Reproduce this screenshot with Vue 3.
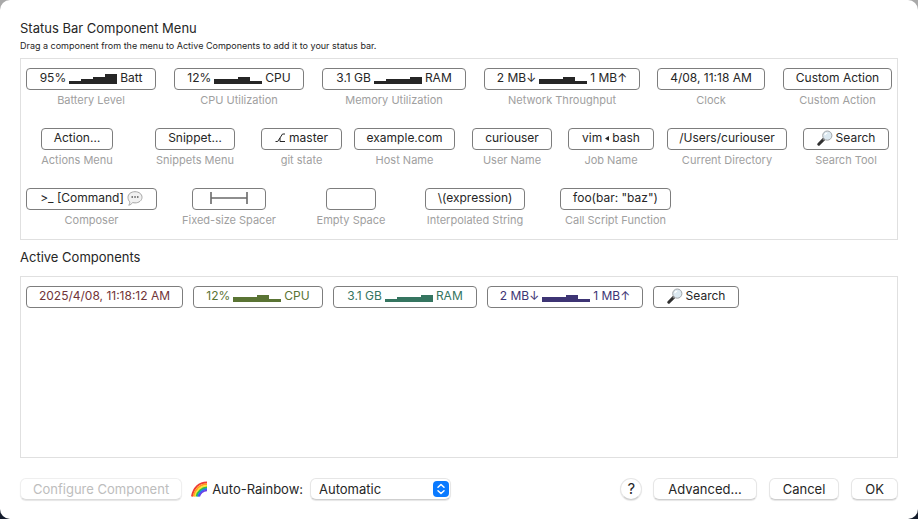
<script setup>
import { ref } from 'vue'

const rows = [
  [
    { label: 'Battery Level', before: '95%', bars: [3, 5, 7, 10], after: 'Batt', width: 130, gap: 0 },
    { label: 'CPU Utilization', before: '12%', bars: [5, 5, 7, 3], after: 'CPU', width: 130, gap: 18 },
    { label: 'Memory Utilization', before: '3.1 GB', bars: [3, 5, 5, 7], after: 'RAM', width: 144, gap: 18 },
    { label: 'Network Throughput', before: '2 MB↓', bars: [5, 5, 7, 3], after: '1 MB↑', width: 156, gap: 18 },
    { label: 'Clock', before: '4/08, 11:18 AM', width: 108, gap: 17 },
    { label: 'Custom Action', before: 'Custom Action', width: 109, gap: 18 },
  ],
  [
    { label: 'Actions Menu', before: 'Action…', width: 72, gap: 15 },
    { label: 'Snippets Menu', before: 'Snippet…', width: 80, gap: 42 },
    { label: 'git state', icon: 'branch', before: 'master', width: 81, gap: 26 },
    { label: 'Host Name', before: 'example.com', width: 101, gap: 12 },
    { label: 'User Name', before: 'curiouser', width: 80, gap: 17 },
    { label: 'Job Name', before: 'vim', icon2: 'triangle', after: 'bash', width: 86, gap: 16 },
    { label: 'Current Directory', before: '/Users/curiouser', width: 120, gap: 13 },
    { label: 'Search Tool', icon: 'search', before: 'Search', width: 86, gap: 16 },
  ],
  [
    { label: 'Composer', before: '>_ [Command]', icon2: 'bubble', width: 131, gap: 0 },
    { label: 'Fixed-size Spacer', icon: 'spacer', width: 74, gap: 35 },
    { label: 'Empty Space', width: 50, gap: 60 },
    { label: 'Interpolated String', before: '\\(expression)', width: 100, gap: 49 },
    { label: 'Call Script Function', before: 'foo(bar: "baz")', width: 111, gap: 35 },
  ],
]

const active = [
  { before: '2025/4/08, 11:18:12 AM', tone: 'red', width: 157 },
  { before: '12%', bars: [5, 5, 7, 3], after: 'CPU', tone: 'olive', width: 130 },
  { before: '3.1 GB', bars: [3, 5, 5, 7], after: 'RAM', tone: 'green', width: 144 },
  { before: '2 MB↓', bars: [5, 5, 7, 3], after: '1 MB↑', tone: 'indigo', width: 156 },
  { icon: 'search', before: 'Search', width: 86 },
]

const rainbow = ref('Automatic')
</script>

<template>
  <div class="backdrop">
    <main class="dialog">
      <h1 class="heading">Status Bar Component Menu</h1>
      <p class="hint">Drag a component from the menu to Active Components to add it to your status bar.</p>

      <section class="panel menu">
        <div v-for="(row, r) in rows" :key="r" class="row">
          <div
            v-for="item in row"
            :key="item.label"
            class="cell"
            :style="{ width: item.width + 'px', marginLeft: item.gap + 'px' }"
          >
            <button type="button" class="chip" :aria-label="item.label">
              <svg v-if="item.icon === 'branch'" class="glyph" width="11" height="10" viewBox="0 0 11 10">
                <path d="M.5 8.5h2.200L7.500 1H10M5 5v3.500h5" fill="none" stroke="currentColor" />
              </svg>
              <svg v-if="item.icon === 'search'" class="glyph" width="16" height="16" viewBox="0 0 16 16">
                <path d="M1.8 14.2 6.6 9.4" stroke="#303030" stroke-width="3" stroke-linecap="round" />
                <path d="m6 10 2-2" stroke="#888" stroke-width="1.5" />
                <circle cx="10.3" cy="5.6" r="4.6" fill="#dce9f1" stroke="#a2a5a8" />
                <path d="M7.8 5.1a2.6 2.6 0 0 1 2.4-2" fill="none" stroke="#fff" stroke-width="1.3" />
              </svg>
              <svg v-if="item.icon === 'spacer'" class="glyph" width="38" height="12" viewBox="0 0 38 12">
                <path d="M1 0v12M37 0v12M1 6h36" fill="none" stroke="#6a6a6a" stroke-width="1.6" />
              </svg>
              <span v-if="item.before">{{ item.before }}</span>
              <svg v-if="item.bars" class="bars" width="48" height="10" viewBox="0 0 48 10">
                <rect v-for="(h, i) in item.bars" :key="i" :x="i * 12" :y="10 - h" width="12" :height="h" />
              </svg>
              <svg v-if="item.icon2 === 'triangle'" class="glyph" width="4" height="6" viewBox="0 0 4 6">
                <path d="M0 3.5 4 1v5z" fill="currentColor" />
              </svg>
              <svg v-if="item.icon2 === 'bubble'" class="glyph" width="16" height="15" viewBox="0 0 16 15">
                <path d="M8 .7c4 0 7 2.4 7 5.6s-3 5.6-7 5.6c-.9 0-1.7-.1-2.5-.3C4.6 13 3.300 14 1.700 14.200c.8-.9 1.200-2.200 1-3.400C1.500 9.700 1 8 1 6.300 1 3.100 4 .7 8 .7z" fill="#f1f1f1" stroke="#a6a6a6" />
                <path d="M4.5 6H6M7.300 6h1.500M10 6h1.500" stroke="#555" stroke-width="1.3" />
              </svg>
              <span v-if="item.after">{{ item.after }}</span>
            </button>
            <span class="label">{{ item.label }}</span>
          </div>
        </div>
      </section>

      <h2 class="heading second">Active Components</h2>
      <section class="panel active">
        <button
          v-for="item in active"
          :key="item.before"
          type="button"
          class="chip"
          :class="item.tone"
          :style="{ width: item.width + 'px' }"
        >
          <svg v-if="item.icon === 'search'" class="glyph" width="16" height="16" viewBox="0 0 16 16">
            <path d="M1.8 14.2 6.6 9.4" stroke="#303030" stroke-width="3" stroke-linecap="round" />
            <path d="m6 10 2-2" stroke="#888" stroke-width="1.5" />
            <circle cx="10.3" cy="5.6" r="4.6" fill="#dce9f1" stroke="#a2a5a8" />
            <path d="M7.8 5.1a2.6 2.6 0 0 1 2.4-2" fill="none" stroke="#fff" stroke-width="1.3" />
          </svg>
          <span>{{ item.before }}</span>
          <svg v-if="item.bars" class="bars" width="48" height="10" viewBox="0 0 48 10">
            <rect v-for="(h, i) in item.bars" :key="i" :x="i * 12" :y="10 - h" width="12" :height="h" />
          </svg>
          <span v-if="item.after">{{ item.after }}</span>
        </button>
      </section>

      <footer class="footer">
        <button type="button" class="push configure" disabled>Configure Component</button>
        <label class="rainbow" for="rainbow">
          <svg width="17" height="17" viewBox="0 0 17 17" fill="none" stroke-width="2">
            <path d="M1 15.500C2.500 7 8 1.500 16 1.500" stroke="#ee3b35" />
            <path d="M2.700 15.500C4 8.500 9 3.300 16 3.300" stroke="#ff9a1f" />
            <path d="M4.200 15.500C5.300 9.500 10 5 16 5" stroke="#ffe23a" />
            <path d="M5.600 15.500C6.500 11 11 6.600 16 6.600" stroke="#2fc146" />
            <path d="M7 15.500C8 12 11.500 8.100 16 8.100" stroke="#2878f0" />
            <path d="M8.300 15.500c.7-2.800 3.500-6 7.700-6" stroke="#6a3be6" stroke-width="1.5" />
          </svg>
          Auto-Rainbow:
        </label>
        <div class="popup">
          <select id="rainbow" v-model="rainbow">
            <option>Automatic</option>
          </select>
          <svg class="arrows" width="16" height="16" viewBox="0 0 16 16">
            <rect width="16" height="16" rx="4" fill="#0a7aff" />
            <path d="M5 6.300 8 3.500l3 2.800M5 9.700l3 2.800 3-2.800" fill="none" stroke="#fff" stroke-width="1.5" stroke-linecap="round" stroke-linejoin="round" />
          </svg>
        </div>
        <span class="grow"></span>
        <button type="button" class="push help" aria-label="Help">?</button>
        <button type="button" class="push advanced">Advanced…</button>
        <button type="button" class="push cancel">Cancel</button>
        <button type="button" class="push">OK</button>
      </footer>
    </main>
  </div>
</template>

<style>
body {
  margin: 0;
}
</style>

<style scoped>
* {
  box-sizing: border-box;
}
.backdrop {
  display: flex;
  min-height: 100vh;
  background: linear-gradient(#a9a9a9 50%, #141c2c 50%);
  font-family: Inter, "Liberation Sans", sans-serif;
  color: #262626;
}
.dialog {
  display: flex;
  flex: 1;
  flex-direction: column;
  min-width: 0;
  padding: 20px 20px 19px;
  border-radius: 10px;
  background: #fff;
}
button,
select {
  font-family: inherit;
  color: inherit;
}
.heading {
  margin: 0;
  font-size: 13px;
  font-weight: 400;
  line-height: 16px;
}
.hint {
  margin: 4px 0 6px;
  font-size: 9px;
  line-height: 12px;
}
.panel {
  border: 1px solid #e0e0e0;
}
.menu {
  display: flex;
  flex-direction: column;
  gap: 20px;
  padding: 9px 5px 11px;
}
.row {
  display: flex;
}
.cell {
  display: flex;
  flex: none;
  flex-direction: column;
  align-items: center;
  gap: 2px;
}
.cell .chip {
  width: 100%;
}
.chip {
  display: flex;
  flex: none;
  align-items: center;
  justify-content: center;
  gap: 3px;
  height: 22px;
  padding: 0 0 2px;
  border: 1px solid #7d7d7d;
  border-radius: 4px;
  background: #fff;
  font-size: 12px;
  line-height: 16px;
  white-space: nowrap;
}
.bars {
  margin-top: 1px;
  fill: currentColor;
  shape-rendering: crispEdges;
}
.glyph {
  flex: none;
}
.label {
  color: #a0a0a0;
  font-size: 11px;
  line-height: 16px;
  white-space: nowrap;
}
.second {
  margin: 9px 0 11px;
}
.active {
  display: flex;
  flex: 1;
  align-items: flex-start;
  gap: 10px;
  min-height: 100px;
  padding: 9px 5px;
}
.red {
  color: #713438;
}
.olive {
  color: #5a7434;
}
.green {
  color: #357560;
}
.indigo {
  color: #3d3474;
}
.footer {
  display: flex;
  align-items: center;
  margin-top: 20px;
  font-size: 13px;
}
.push {
  height: 22px;
  padding: 0 13px;
  border: 1px solid #e6e6e6;
  border-bottom-color: #cfcfcf;
  border-radius: 6px;
  background: #fff;
  box-shadow: 0 1px 1px #0000001a;
  font-size: 13px;
  line-height: 16px;
  white-space: nowrap;
}
.push:disabled {
  border-color: #efefef;
  border-bottom-color: #dcdcdc;
  color: #bdbdbd;
}
.configure {
  padding: 0 12px;
}
.rainbow {
  display: flex;
  align-items: center;
  gap: 4px;
  margin: 0 7px 0 9px;
}
.popup {
  position: relative;
}
.popup select {
  display: block;
  width: 141px;
  height: 22px;
  padding: 0 24px 0 8px;
  border: 1px solid #e6e6e6;
  border-bottom-color: #cfcfcf;
  border-radius: 6px;
  background: #fff;
  box-shadow: 0 1px 1px #0000001a;
  font-size: 13px;
  appearance: none;
}
.arrows {
  position: absolute;
  top: 3px;
  right: 2px;
  pointer-events: none;
}
.grow {
  flex: 1;
}
.help {
  width: 22px;
  margin-right: 11px;
  padding: 0;
  border-radius: 50%;
  font-size: 15px;
}
.advanced,
.cancel {
  margin-right: 12px;
}
.advanced {
  padding: 0 14px;
}
</style>
